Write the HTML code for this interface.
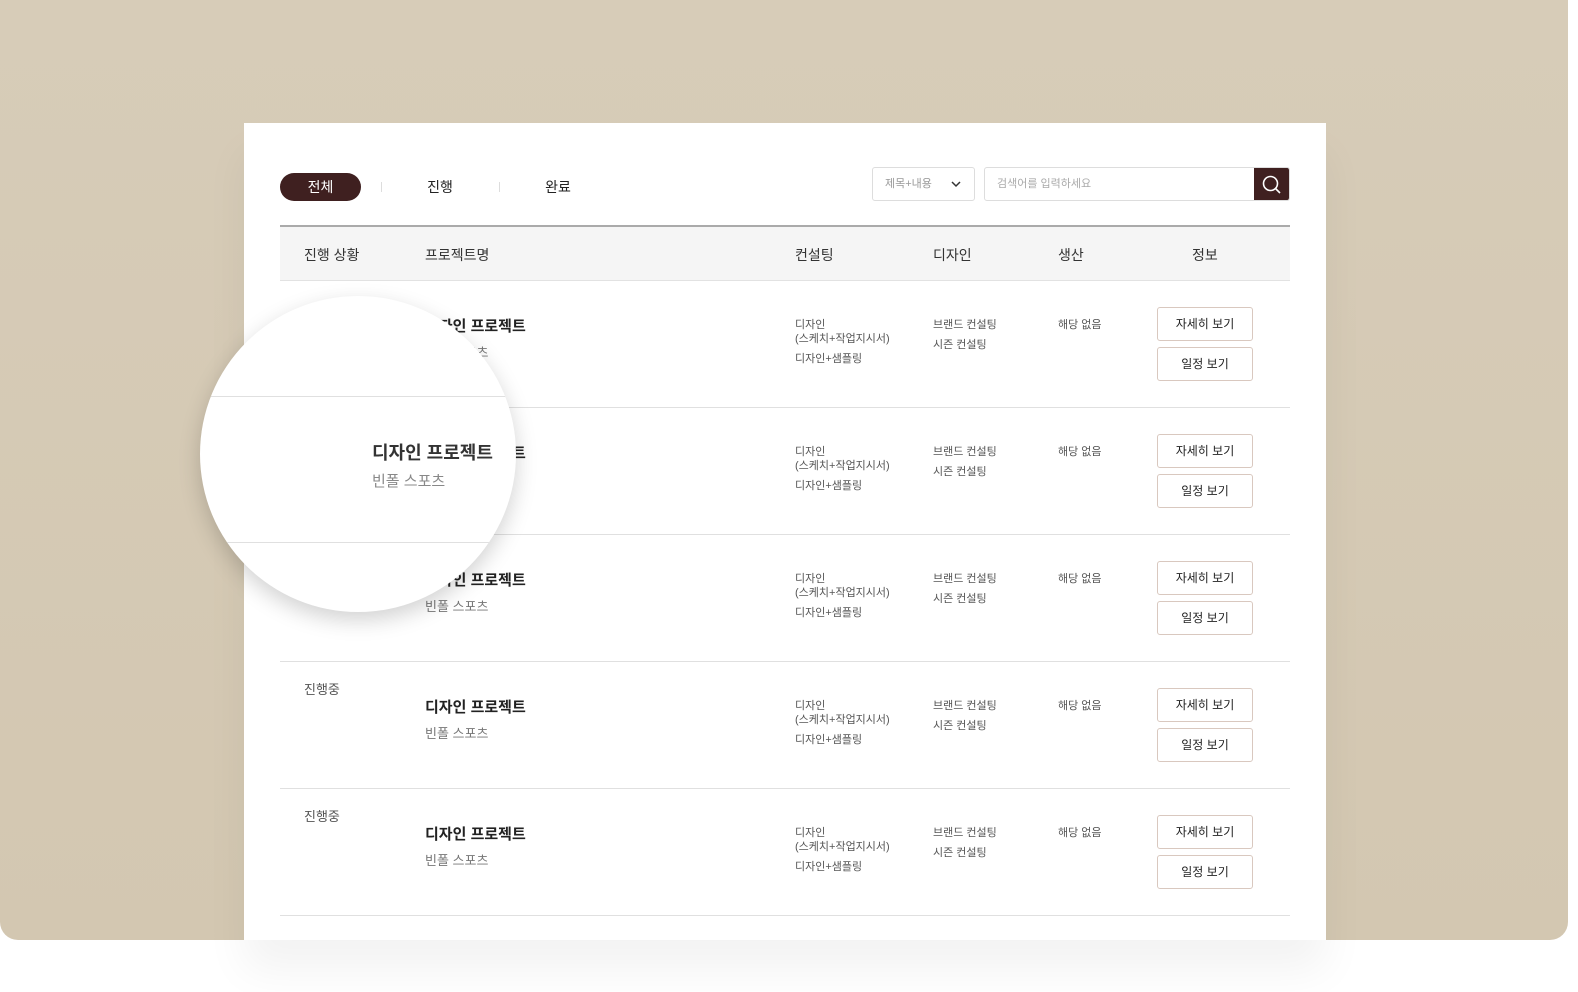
<!DOCTYPE html>
<html><head><meta charset="utf-8"><style>
*{margin:0;padding:0;box-sizing:border-box}
body{width:1578px;height:992px;background:#fff;position:relative;overflow:hidden;font-family:"Liberation Sans","Noto Sans CJK KR",sans-serif;color:#333}
.bg{position:absolute;left:0;top:0;width:1568px;height:940px;background:linear-gradient(180deg,#d7ccb8,#d3c7b1);border-radius:0 0 18px 18px}
.card{position:absolute;left:244px;top:123px;width:1082px;height:817px;background:#fff;box-shadow:0 30px 40px rgba(0,0,0,0.05)}
.abs{position:absolute}
.tab{position:absolute;top:173px;height:28px;font-size:14px;line-height:28px;text-align:center;color:#222}
.sep{position:absolute;top:182px;width:1px;height:10px;background:#ddd}
.thead{position:absolute;left:280px;top:225px;width:1010px;height:56px;background:#f5f5f5;border-top:2px solid #aaa;border-bottom:1px solid #e2e2e2}
.th{position:absolute;top:245px;font-size:14px;color:#333}
.row{position:absolute;left:280px;width:1010px;height:127px;border-bottom:1px solid #e0e0e0}
.t{position:absolute;font-size:12px;color:#555;line-height:15px}
.btn{position:absolute;width:96px;height:34px;border:1px solid #d9c8bf;border-radius:3px;font-size:12px;color:#222;text-align:center;line-height:32px;background:#fff}
.circle{position:absolute;left:200px;top:296px;width:316px;height:316px;border-radius:50%;background:#fff;box-shadow:0 8px 22px rgba(0,0,0,0.18);overflow:hidden}
</style></head><body>
<div class="bg"></div>
<div class="card"></div>
<div class="tab" style="left:280px;width:81px;background:#3f2020;color:#fff;border-radius:14px">전체</div>
<div class="sep" style="left:381px"></div>
<div class="tab" style="left:410px;width:60px">진행</div>
<div class="sep" style="left:499px"></div>
<div class="tab" style="left:528px;width:60px">완료</div>
<div class="abs" style="left:872px;top:167px;width:103px;height:34px;border:1px solid #ddd;border-radius:3px;font-size:11px;color:#999;line-height:32px;padding-left:12px">제목+내용
<svg style="position:absolute;left:78px;top:12px" width="10" height="8" viewBox="0 0 10 8"><path d="M1 2l4 4 4-4" fill="none" stroke="#333" stroke-width="1.5"/></svg></div>
<div class="abs" style="left:984px;top:167px;width:306px;height:34px;border:1px solid #ddd;border-radius:3px;font-size:11px;color:#aaa;line-height:32px;padding-left:12px;overflow:hidden">검색어를 입력하세요
<div class="abs" style="right:0;top:-1px;width:35px;height:34px;background:#3f2020;border-radius:0 3px 3px 0"><svg style="position:absolute;left:8px;top:8px" width="20" height="20" viewBox="0 0 20 20"><circle cx="8.5" cy="8.5" r="7" fill="none" stroke="#fff" stroke-width="1.6"/><path d="M13.5 13.5l4.5 4.5" stroke="#fff" stroke-width="1.6"/></svg></div></div>
<div class="thead"></div>
<div class="th" style="left:304px">진행 상황</div>
<div class="th" style="left:425px">프로젝트명</div>
<div class="th" style="left:795px">컨설팅</div>
<div class="th" style="left:933px">디자인</div>
<div class="th" style="left:1058px">생산</div>
<div class="th" style="left:1192px">정보</div>

<div class="row" style="top:281px"></div>
<div class="row" style="top:408px"></div>
<div class="row" style="top:535px"></div>
<div class="row" style="top:662px"></div>
<div class="row" style="top:789px"></div>

<div id="rows"></div>
<script>
var ys=[281,408,535,662,789],h='';
ys.forEach(function(y,i){
 if(i>=3)h+='<div class="t" style="left:304px;top:'+(y+20)+'px;font-size:13px">진행중</div>';
 h+='<div class="t" style="left:425px;top:'+(y+37)+'px;font-size:15px;font-weight:600;color:#222;line-height:18px">디자인 프로젝트</div>';
 h+='<div class="t" style="left:425px;top:'+(y+64)+'px;font-size:13px;color:#777">빈폴 스포츠</div>';
 h+='<div class="t" style="left:795px;top:'+(y+37)+'px;font-size:11px;line-height:14px">디자인<br>(스케치+작업지시서)</div>';
 h+='<div class="t" style="left:795px;top:'+(y+71)+'px;font-size:11px">디자인+샘플링</div>';
 h+='<div class="t" style="left:933px;top:'+(y+34)+'px;font-size:11px;line-height:20px">브랜드 컨설팅<br>시즌 컨설팅</div>';
 h+='<div class="t" style="left:1058px;top:'+(y+37)+'px;font-size:11px">해당 없음</div>';
 h+='<div class="btn" style="left:1157px;top:'+(y+26)+'px">자세히 보기</div>';
 h+='<div class="btn" style="left:1157px;top:'+(y+66)+'px">일정 보기</div>';
});
document.getElementById('rows').innerHTML=h;
</script>
<div class="circle">
 <div class="abs" style="left:0;top:100px;width:316px;height:1px;background:#e0e0e0"></div>
 <div class="abs" style="left:0;top:246px;width:316px;height:1px;background:#e0e0e0"></div>
 <div class="abs" style="left:172px;top:143px;font-size:18px;font-weight:600;color:#333">디자인 프로젝트</div>
 <div class="abs" style="left:172px;top:174px;font-size:15px;color:#888">빈폴 스포츠</div>
</div>
</body></html>
